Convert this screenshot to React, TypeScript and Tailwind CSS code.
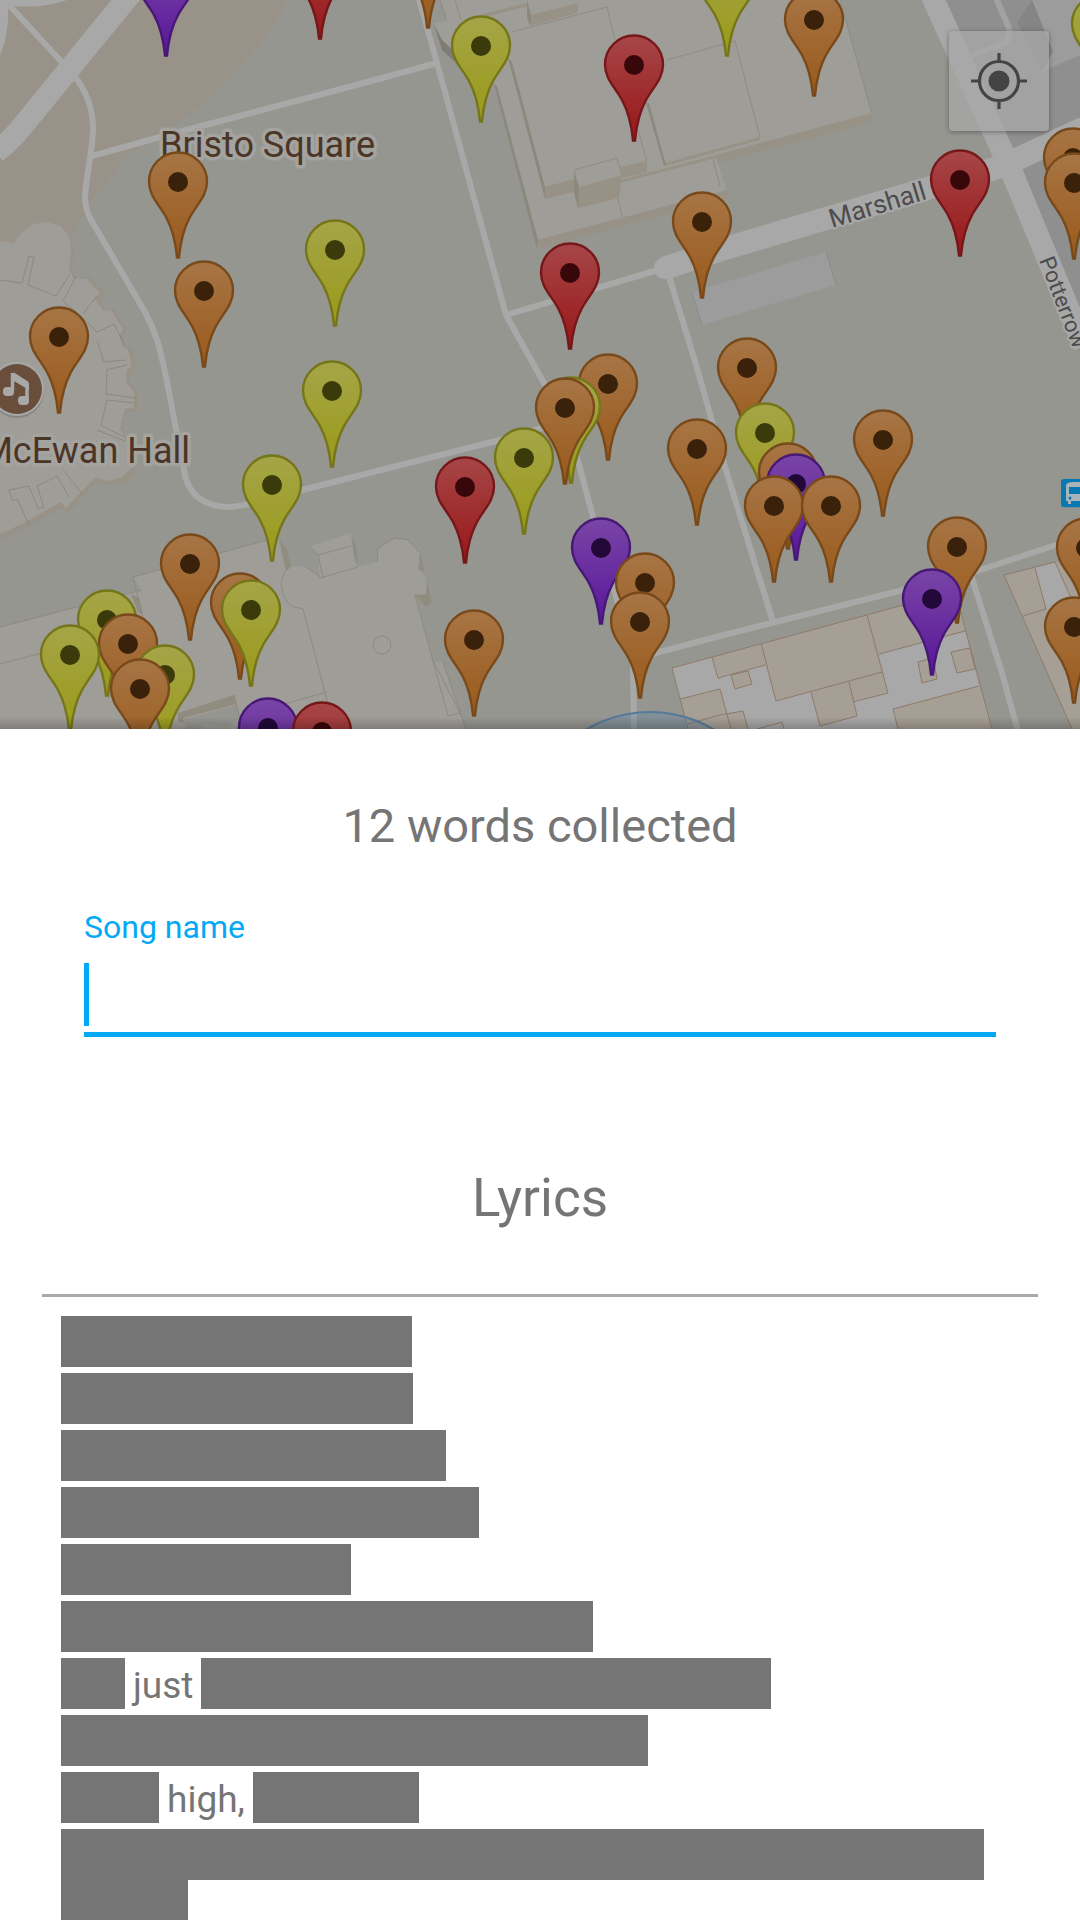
import React from "react";

type PinColor = "orange" | "yellow" | "red" | "purple";

const PIN_PAINT: Record<PinColor, { top: string; bottom: string; edge: string; dot: string }> = {
  orange: { top: "#a77545", bottom: "#9a5a1b", edge: "#78491a", dot: "#3a220a" },
  yellow: { top: "#a5a548", bottom: "#9a9a19", edge: "#757519", dot: "#3a3a0a" },
  red: { top: "#a74647", bottom: "#981719", edge: "#761719", dot: "#380709" },
  purple: { top: "#7945a6", bottom: "#591799", edge: "#471875", dot: "#220839" },
};

// Each entry is the point that the pin's tip marks, north to south so that nearer pins overlap.
const PINS: [number, number, PinColor][] = [
  [428, 29, "orange"],
  [320, 40, "red"],
  [166, 57, "purple"],
  [727, 57, "yellow"],
  [814, 97, "orange"],
  [1101, 101, "yellow"],
  [481, 123, "yellow"],
  [634, 142, "red"],
  [1073, 235, "orange"],
  [960, 257, "red"],
  [178, 259, "orange"],
  [1074, 260, "orange"],
  [702, 299, "orange"],
  [335, 327, "yellow"],
  [570, 350, "red"],
  [204, 368, "orange"],
  [59, 414, "orange"],
  [747, 445, "orange"],
  [608, 461, "orange"],
  [332, 468, "yellow"],
  [571, 484, "yellow"],
  [565, 485, "orange"],
  [765, 510, "yellow"],
  [883, 517, "orange"],
  [697, 526, "orange"],
  [524, 535, "yellow"],
  [788, 550, "orange"],
  [796, 561, "purple"],
  [272, 562, "yellow"],
  [465, 564, "red"],
  [774, 583, "orange"],
  [831, 583, "orange"],
  [957, 624, "orange"],
  [601, 625, "purple"],
  [1086, 625, "orange"],
  [190, 641, "orange"],
  [645, 660, "orange"],
  [932, 676, "purple"],
  [240, 680, "orange"],
  [251, 687, "yellow"],
  [107, 697, "yellow"],
  [640, 699, "orange"],
  [1074, 704, "orange"],
  [474, 717, "orange"],
  [128, 721, "orange"],
  [70, 732, "yellow"],
  [165, 752, "yellow"],
  [140, 766, "orange"],
  [268, 805, "purple"],
  [322, 809, "red"],
];

function Pin({ x, y, color }: { x: number; y: number; color: PinColor }) {
  const paint = PIN_PAINT[color];
  return (
    <g transform={`translate(${x} ${y})`}>
      <path
        d="M-1-1.500C-2.500-18-6-31-12-42C-19-55-29-63-29-77.500A29 29 0 0 1 29-77.500C29-63 19-55 12-42C6-31 2.500-18 1-1.500Z"
        fill={`url(#pin-${color})`}
        stroke={paint.edge}
        strokeWidth="2.4"
      />
      <circle cy="-77" r="10" fill={paint.dot} />
    </g>
  );
}

function Buildings() {
  return (
    <g>
      {/* Lecture block, top centre */}
      <path d="M440 0L447 21L434 23L442 45L455 62L494 80L537 241L727 191L716 156L872 114L840 0Z" fill="#9f9d98" />
      <g fill="#989286">
        <path d="M537 240L727 190L729 198L537 249Z" />
        <path d="M716 155L872 113L872 122L718 163Z" />
        <path d="M545 187L574 179L574 192L545 199Z" />
        <path d="M579 187L622 175L619 198L578 208Z" />
        <path d="M621 167L647 161L647 172L622 178Z" />
        <path d="M530 15L578 3L578 13L530 26Z" />
        <path d="M483 14L527 3L528 6L485 17Z" />
        <path d="M620 180L720 154L720 157L620 183Z" />
        <path d="M665 163L760 137L760 140L665 166Z" />
      </g>
      <g fill="#8d887c">
        <path d="M508 58L512 62L545 187L545 199Z" />
        <path d="M494 84L497 86L538 240L537 249Z" />
        <path d="M574 170L579 187L578 208L574 193Z" />
        <path d="M527 0L531 15L530 26L527 17Z" />
        <path d="M434 24L442 40L455 52L455 62L442 50Z" fill="#7f7c75" />
        <path d="M646 103L649 103L666 165L664 166Z" />
      </g>
      <g fill="none" stroke="#908b7f" strokeWidth="1">
        <path d="M512 32L607 7L615 40M667 60L735 41L760 137M574 170L617 158L622 175M618 198L622 217M638 130L647 161M440 0L447 21M455 0L461 20M840 0L872 114M713 159L720 186" />
      </g>
      <path d="M692 292L826 252L836 285L702 325Z" fill="#9c9c9c" />
      <path d="M692 292L702 325M826 252L836 285" stroke="#8c8c88" strokeWidth="1" />

      {/* McEwan Hall */}
      <path
        d="M0 241L14 243L22 232L33 224L47 222L60 226L70 236L75 252L71 268L77 280L89 276L105 294L99 300L107 311L114 308L127 331L122 336L126 347L132 348L137 368L131 372L129 382L137 390L137 411L126 412L122 430L137 455L136 475L125 482L110 485L95 482L83 497L68 513L62 508L30 526L0 541Z"
        fill="#989286"
      />
      <path
        d="M0 241L14 243L22 232L33 224L47 222L60 226L69 236L71 252L69 268L74 279L87 279L100 293L95 299L104 311L111 310L123 329L119 336L123 347L128 350L132 366L127 370L126 382L134 392L134 408L125 409L120 428L133 455L133 467L122 477L110 481L95 478L80 493L66 508L61 502L28 521L0 534Z"
        fill="#9f9d98"
      />
      <g fill="none" stroke="#807c71" strokeWidth="1">
        <path d="M0 280L22 283L29 256L34 257L28 285L56 296L70 274M63 301L76 276M64 302L83 318L97 332L114 324L124 343M83 314L97 296M97 340L104 362L125 360M106 370L127 365M107 370L106 394L136 398M107 400L135 403M107 400L101 425L124 437M97 430L125 441M9 490L29 486L38 509L44 507L37 486L57 476L69 497M63 470L83 495M9 490L12 500L18 500L29 525" opacity=".65" />
      </g>

      {/* Teviot House, bottom left */}
      <path
        d="M0 627L142 590L133 577L267 540L279 540L291 567L303 565L320 577L317 555L310 546L352 533L358 567L377 562L378 548L395 538L408 540L420 553L420 570L427 580L426 594L416 596L434 662L443 662L460 713L465 729H0Z"
        fill="#9f9d98"
      />
      <path d="M184 719L237 705L240 718L228 726L205 724L200 729H186Z" fill="#959690" />
      <g fill="#918c80">
        <path d="M279 540L287 549L291 567L286 571Z" />
        <path d="M420 553L425 572L418 570Z" />
        <path d="M427 580L432 602L426 607L415 595L426 594Z" />
        <path d="M131 594L139 598L143 615L138 612Z" />
        <path d="M178 713L234 695L237 704L183 718L185 723L178 722Z" />
        <path d="M351 533L356 546L358 567L354 557Z" />
      </g>
      <g fill="none" stroke="#8f897e" strokeWidth="1">
        <path d="M133 577L145 625M0 664L72 645M0 627L142 590M133 577L267 540M310 546L318 555L351 546M318 555L323 578M290 567C276 577 281 598 292 606L303 609L330 712M270 708L327 692M234 695L240 720M303 565L320 577M358 567L320 578M377 562L378 548L395 538L408 540L420 553M415 595L448 716L460 713L434 662M443 662L466 729" />
        <circle cx="382" cy="645" r="9" />
      </g>

      {/* Shops south of the crossroads */}
      <path d="M672 668L955 591L992 729H688Z" fill="#a69f95" />
      <path d="M672 668L712 657L718 678L723 689L680 699Z" fill="#a8a8a8" />
      <path
        d="M720 677L765 665L776 701L811 692L820 726L857 716L853 702L888 693L879 654L965 631L979 686L893 709L898 729H748L743 711L727 714L720 689Z"
        fill="#a8a8a8"
      />
      <g fill="#a69f95" stroke="#8e7a69" strokeWidth="1">
        <path d="M731 675L748 671L752 684L735 689Z" />
        <path d="M918 662L933 658L937 679L922 683Z" />
        <path d="M951 652L970 648L975 669L957 673Z" />
      </g>
      <g fill="none" stroke="#8e7a69" strokeWidth="1">
        <path d="M672 668L955 591L992 729M672 668L688 729M712 657L718 678L765 665M680 699L720 689L731 729M720 715L743 711L748 729M761 643L776 701L882 672M811 692L820 726L857 716L849 682M853 702L888 693L867 615M879 654L965 631M979 686L893 709L898 729M757 729L782 722L784 729M688 724L720 715" />
      </g>
      <path d="M1004 575L1055 562L1080 556V729H1072Z" fill="#a69f95" />
      <path d="M1035 568L1055 562L1080 618L1046 609Z" fill="#a8a8a8" />
      <path d="M1072 729L1004 575L1055 562L1080 618M1023 616L1046 609L1035 568" fill="none" stroke="#8e7a69" strokeWidth="1" />
    </g>
  );
}

function Roads() {
  return (
    <g fill="none" stroke="#a8a8a8" strokeLinejoin="round">
      <path d="M0 0H67C48 7 25 8 8 5C9 25 6 42 0 55Z" fill="#a8a8a8" stroke="none" />
      <path d="M142-20L34 112C22 127 12 140-4 152" strokeWidth="22" />
      <path d="M8 4L72 73C88 92 93 110 93 128C93 150 85 180 85 200Q86 210 90 218L145 312C160 340 162 360 167 382L184 470C188 498 208 507 230 507C250 506 280 496 302 490L500 440L560 423" strokeWidth="6" />
      <path d="M92 156L160 137L360 84L437 63" strokeWidth="6" />
      <path d="M417-8L437 63L506 315L545 385Q568 420 577 457L593 517L620 610Q633 640 633 665L634 729" strokeWidth="6" />
      <path d="M506 315L665 268" strokeWidth="6" />
      <path d="M667 270L697 368L725 467L773 622" strokeWidth="6" />
      <path d="M633 659L720 636L903 590L980 570L1080 537" strokeWidth="6" />
      <path d="M971 575L1002 673L1019 735" strokeWidth="6" />
      <circle cx="665" cy="268" r="11" fill="#a8a8a8" stroke="none" />
      <path d="M665 268L720 250L1000 167L1084 128" strokeWidth="23" />
      <path d="M930-8L1010 168L1084 346" strokeWidth="22" />
      <path d="M995-4L1009 28Q1012 38 1004 43L966 58" strokeWidth="6" stroke="#a2a2a2" />
    </g>
  );
}

function CampusMap() {
  return (
    <svg viewBox="0 0 1080 729" className="block w-full" role="img" aria-label="Map of collected and uncollected words">
      <defs>
        {(Object.keys(PIN_PAINT) as PinColor[]).map((name) => (
          <linearGradient key={name} id={`pin-${name}`} x1="0" y1="0" x2="0" y2="1">
            <stop offset="0" stopColor={PIN_PAINT[name].top} />
            <stop offset="1" stopColor={PIN_PAINT[name].bottom} />
          </linearGradient>
        ))}
        <linearGradient id="sheet-shadow" x1="0" y1="0" x2="0" y2="1">
          <stop offset="0" stopColor="#000" stopOpacity="0" />
          <stop offset="1" stopColor="#000" stopOpacity=".2" />
        </linearGradient>
      </defs>

      <rect width="1080" height="729" fill="#959690" />
      <path d="M0 0H287C275 30 255 50 238 68C220 90 202 106 178 122L128 155L95 198L72 235L45 270L0 312Z" fill="#989289" />
      <path d="M945 0H1080V313L1023 169L1013 149Z" fill="#8f8f8f" />
      <path d="M1032 0H1080V55L1042 72Z" fill="#9c9c9c" />
      <path d="M1032 0L1017 22L1042 72L1053 51Z" fill="#858585" />

      <Buildings />
      <Roads />
      <circle cx="650" cy="837" r="125" fill="#4d7ca8" fillOpacity=".25" stroke="#56799a" strokeWidth="2" />

      <g fontFamily="Roboto, sans-serif" paintOrder="stroke" strokeLinejoin="round" stroke="#a4a39f">
        <g fontSize="36" fill="#4b3526" strokeWidth="7">
          <text x="160" y="157">Bristo Square</text>
          <text x="190" y="463" textAnchor="end">McEwan Hall</text>
        </g>
        <g fill="#4c4c4c" stroke="#a8a8a8" strokeWidth="4">
          <text fontSize="26" transform="translate(832 228) rotate(-17)">Marshall St</text>
          <text fontSize="22" transform="translate(1039 260) rotate(69)">Potterrow</text>
        </g>
      </g>

      <circle cx="17" cy="391" r="27" fill="#858480" />
      <circle cx="17" cy="389" r="27" fill="#a8a8a8" />
      <circle cx="17" cy="389" r="25" fill="#6a4e3c" />
      <path d="M13 374L27 383V399" fill="none" stroke="#a8a8a8" strokeWidth="3.500" />
      <path d="M12.500 373V390" stroke="#a8a8a8" strokeWidth="3.500" />
      <path d="M10.500 373L29 384V390L14 381Z" fill="#a8a8a8" />
      <rect x="3" y="387" width="11" height="9" rx="4" fill="#a8a8a8" />
      <rect x="18" y="396" width="11" height="9" rx="4" fill="#a8a8a8" />

      <rect x="1061" y="480" width="28" height="28" rx="3" fill="#7d8b92" />
      <rect x="1061" y="479" width="28" height="28" rx="3" fill="#0878b3" />
      <path d="M1066 485Q1067 482 1073 482H1088V501H1084V504H1081V501H1071V504H1068V501H1066Z" fill="#a8b4ba" />
      <path d="M1069 487H1088V494H1069Z" fill="#0878b3" />
      <circle cx="1070" cy="498" r="1.500" fill="#0878b3" />

      {PINS.map(([x, y, color]) => (
        <Pin key={`${x}-${y}`} x={x} y={y} color={color} />
      ))}
      <rect y="717" width="1080" height="12" fill="url(#sheet-shadow)" />
    </svg>
  );
}

// A number is a hidden run of that width; a string is a word that has been collected.
const LYRICS: (number | string)[][] = [
  [351],
  [352],
  [385],
  [418],
  [290],
  [532],
  [64, "just", 570],
  [587],
  [98, "high,", 166],
];
const WRAPPED_LINE = [923, 127];

function Hidden({ width }: { width: number }) {
  return <span className="h-[51px] max-w-full bg-[#757575]" style={{ width }} />;
}

export default function App() {
  return (
    <main className="flex h-screen flex-col overflow-hidden bg-white font-[Roboto,sans-serif] text-[#757575]">
      <section className="relative shrink-0">
        <CampusMap />
        <button
          type="button"
          aria-label="My location"
          className="absolute top-[31px] right-[31px] flex size-[100px] items-center justify-center rounded-sm bg-[#a8a8a8]/75 shadow-[0_1px_5px_rgba(0,0,0,0.35)]"
        >
          <svg viewBox="0 0 56 56" className="size-14" fill="none" stroke="#444" strokeWidth="3.200">
            <circle cx="28" cy="28" r="19.500" />
            <circle cx="28" cy="28" r="10.500" fill="#444" stroke="none" />
            <path d="M28 0V8M28 48V56M0 28H8M48 28H56" />
          </svg>
        </button>
      </section>

      <section className="flex min-h-0 flex-1 flex-col">
        <h1 className="mt-[69px] text-center text-[47px] leading-[56px]">12 words collected</h1>

        <form className="mx-[84px] mt-[53px] flex flex-col text-[#03a9f4]" onSubmit={(e) => e.preventDefault()}>
          <label htmlFor="song-name" className="text-[32px] leading-[40px]">
            Song name
          </label>
          <div className="relative mt-4 border-b-[5px] border-[#03a9f4] pb-[6px]">
            <input
              id="song-name"
              type="text"
              autoComplete="off"
              className="block h-[63px] w-full bg-transparent text-[47px] text-[#212121] caret-transparent outline-none"
            />
            <span aria-hidden="true" className="pointer-events-none absolute top-0 left-0 h-[63px] w-[5px] bg-[#03a9f4]" />
          </div>
        </form>

        <h2 className="mt-[129px] text-center text-[53px] leading-[64px]">Lyrics</h2>
        <hr className="mx-[42px] mt-16 border-t-[3px] border-[#a9a9a9]" />

        <div className="mx-[61px] mt-[19px] flex flex-col gap-1.5 text-[37px] leading-[55px]">
          {LYRICS.map((line, i) => (
            <p key={i} className="flex h-[51px]">
              {line.map((part, j) =>
                typeof part === "number" ? (
                  <Hidden key={j} width={part} />
                ) : (
                  <span key={j} className="px-2">
                    {part}
                  </span>
                ),
              )}
            </p>
          ))}
          <p className="flex flex-col">
            {WRAPPED_LINE.map((width) => (
              <Hidden key={width} width={width} />
            ))}
          </p>
        </div>
      </section>
    </main>
  );
}
